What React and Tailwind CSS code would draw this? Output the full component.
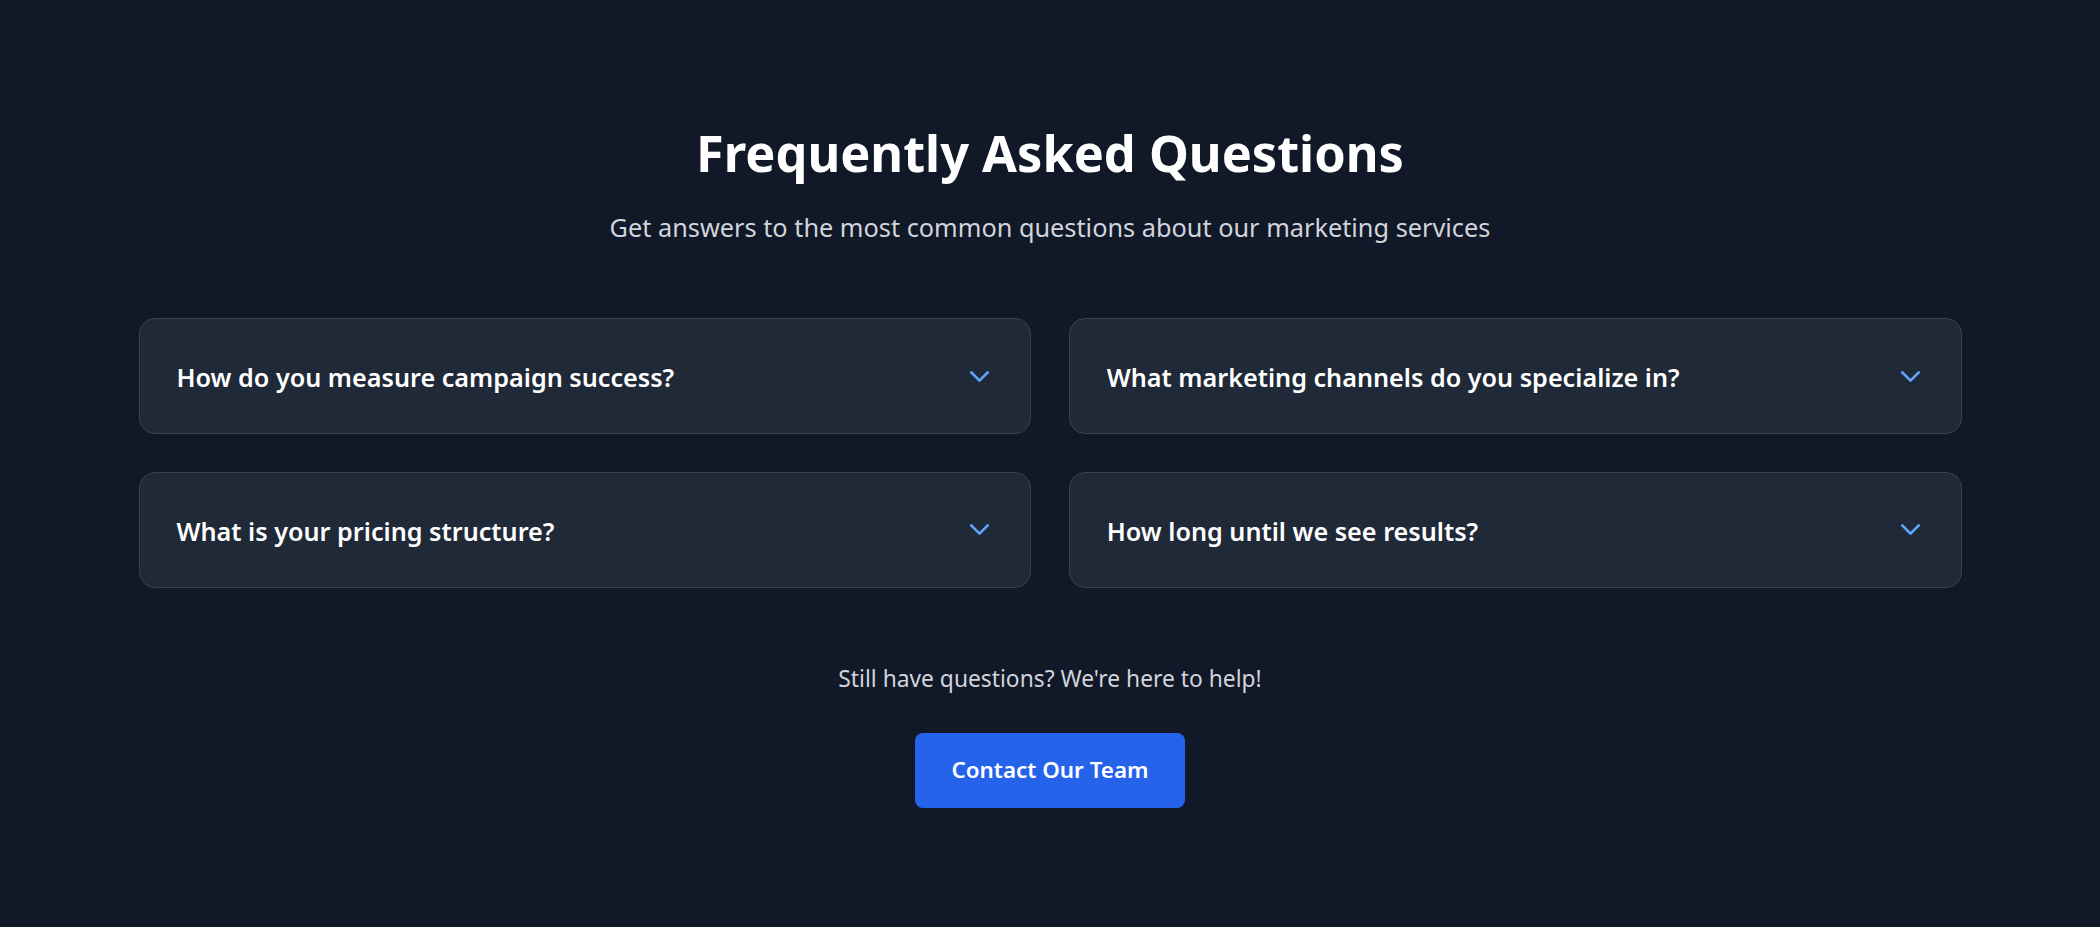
import React from "react";
import { ChevronDown } from "lucide-react";

const faqs = [
  "How do you measure campaign success?",
  "What marketing channels do you specialize in?",
  "What is your pricing structure?",
  "How long until we see results?",
];

export default function App() {
  return (
    <div
      className="min-h-screen bg-[#111827] text-white"
      style={{ fontFamily: '"Noto Sans", "Open Sans", sans-serif' }}
    >
      <div className="pt-[123px] pb-[120px]">
        <h1 className="text-center text-[50.5px] leading-[60px] font-bold text-white">
          Frequently Asked Questions
        </h1>
        <p className="mt-[26px] text-center text-[25.3px] leading-[36px] text-[#d1d5db]">
          Get answers to the most common questions about our marketing services
        </p>

        <div className="mx-auto mt-[73px] grid w-[1823px] grid-cols-2 gap-[37.5px]">
          {faqs.map((q) => (
            <button
              key={q}
              className="flex items-center justify-between rounded-[16px] border border-[#374151] bg-[#1f2937] pl-[37px] pr-[34px] py-[39px] text-left"
            >
              <span className="translate-y-[1px] text-[25.2px] leading-[36px] font-semibold text-white">
                {q}
              </span>
              <ChevronDown className="h-[33px] w-[33px] text-[#60a5fa]" strokeWidth={2} />
            </button>
          ))}
        </div>

        <div className="mt-[75px] flex flex-col items-center">
          <p className="text-[22.8px] leading-[32px] text-[#d1d5db]">
            Still have questions? We're here to help!
          </p>
          <button className="mt-[38px] h-[75px] w-[270px] rounded-[8px] bg-[#2563eb] text-[22.4px] leading-[32px] font-semibold text-white">
            Contact Our Team
          </button>
        </div>
      </div>
    </div>
  );
}
